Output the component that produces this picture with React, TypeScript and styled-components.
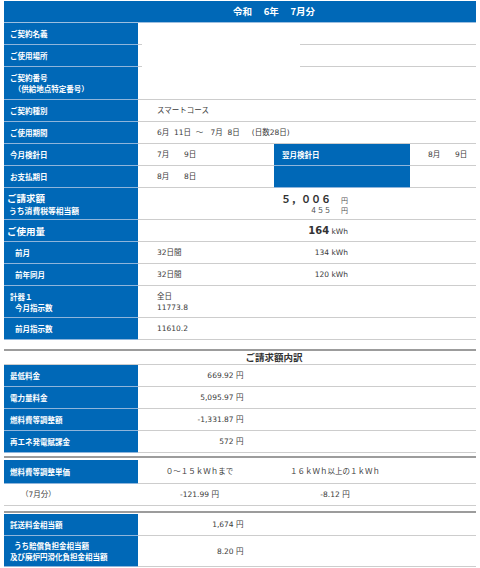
import React from "react";
import styled, { createGlobalStyle, css } from "styled-components";

const BLUE = "#0068b7";
const LATIN = `"DejaVu Sans", "Noto Sans CJK JP", sans-serif`;
const JP = `"Noto Sans CJK JP", "DejaVu Sans", sans-serif`;

const Global = createGlobalStyle`
  html, body { margin: 0; padding: 0; background: #fff; }
  body { font-family: ${LATIN}; color: #3a3a3a; }
`;

const Page = styled.main`
  display: flex;
  flex-direction: column;
  padding: 1px 4px 0;
`;

const Table = styled.section<{ $cols: string; $ruled?: boolean; $gap?: number; $pt?: number }>`
  display: grid;
  grid-template-columns: ${(p) => p.$cols};
  margin-top: ${(p) => p.$gap ?? 0}px;
  padding-top: ${(p) => p.$pt ?? 0}px;
  border-top: ${(p) => (p.$ruled ? "2px solid #9c9c9c" : "0")};
`;

const Banner = styled.div`
  grid-column: 1 / -1;
  height: 21px;
  background: ${BLUE};
  border-bottom: 1px solid #9dbfe0;
  color: #fff;
  font: bold 9.5px/21px ${JP};
  text-align: center;
  padding-left: 68px;
  white-space: pre;
`;

const Title = styled.div`
  grid-column: 1 / -1;
  height: 13px;
  border-bottom: 1px solid #cdcdcd;
  color: #333;
  font: bold 9.5px/13px ${JP};
  text-align: center;
  padding-left: 68px;
`;

const Label = styled.div<{ $col?: string; $pl?: number; $h?: number }>`
  grid-column: ${(p) => p.$col ?? "auto"};
  min-height: ${(p) => p.$h ?? 21}px;
  padding-left: ${(p) => p.$pl ?? 6}px;
  background: ${BLUE};
  border-bottom: 1px solid #8fb5db;
  color: #fff;
  font: bold 7.5px/11px ${JP};
  display: flex;
  flex-direction: column;
  justify-content: center;
  white-space: pre;
`;

const Value = styled.div<{
  $col?: string;
  $pl?: number;
  $h?: number;
  $align?: "start" | "center" | "end";
  $redact?: boolean;
}>`
  grid-column: ${(p) => p.$col ?? "auto"};
  min-height: ${(p) => p.$h ?? 21}px;
  padding-left: ${(p) => p.$pl ?? 19}px;
  border-bottom: 1px solid #cdcdcd;
  color: #3a3a3a;
  font: 7.5px/11px ${LATIN};
  display: flex;
  flex-direction: column;
  justify-content: center;
  align-items: ${(p) => (p.$align === "center" ? "center" : p.$align === "end" ? "flex-end" : "flex-start")};
  white-space: pre;
  ${(p) =>
    p.$redact &&
    css`
      border-image: linear-gradient(to right, #cdcdcd 5px, transparent 5px, transparent 162px, #cdcdcd 162px) 1;
    `}
`;

const Line = styled.span<{ $size?: number; $indent?: number; $lh?: number }>`
  display: block;
  font-size: ${(p) => p.$size ?? 7.5}px;
  line-height: ${(p) => p.$lh ?? 11}px;
  margin-left: ${(p) => p.$indent ?? 0}px;
`;

const Amounts = styled.div`
  display: grid;
  grid-template-columns: 193px auto;
  grid-template-rows: 12px 10px;
  column-gap: 10px;
  align-items: end;
`;

const BigAmount = styled.span`
  justify-self: end;
  font: bold 10px/12px ${JP};
  color: #333;
`;

const SmallAmount = styled.span`
  justify-self: end;
  font: 7px/10px ${JP};
  color: #444;
`;

const Yen = styled.span`
  font: 7px/10px ${JP};
  color: #555;
`;

const Usage = styled.div`
  box-sizing: border-box;
  width: 210px;
  padding-left: 19px;
  display: flex;
  justify-content: space-between;
  align-items: baseline;
`;

const BigNum = styled.b`
  font: bold 10px/12px ${LATIN};
  color: #333;
`;

const Money = styled.div`
  width: 105.5px;
  text-align: right;
`;

export default function App() {
  return (
    <>
      <Global />
      <Page>
        <Table $cols="134px 136px 136px 1fr">
          <Banner>{"令和\u3000 6年\u3000 7月分"}</Banner>

          <Label>ご契約名義</Label>
          <Value $col="2 / -1" $redact />

          <Label>ご使用場所</Label>
          <Value $col="2 / -1" $redact />

          <Label $h={32}>
            <Line>ご契約番号</Line>
            <Line>{"\u3000（供給地点特定番号）"}</Line>
          </Label>
          <Value $col="2 / -1" $h={32} />

          <Label>ご契約種別</Label>
          <Value $col="2 / -1">スマートコース</Value>

          <Label>ご使用期間</Label>
          <Value $col="2 / -1">{"6月  11日  ～   7月  8日     (日数28日)"}</Value>

          <Label>今月検針日</Label>
          <Value>{"7月\u3000   9日"}</Value>
          <Label $pl={8}>翌月検針日</Label>
          <Value $pl={18}>{"8月\u3000   9日"}</Value>

          <Label>お支払期日</Label>
          <Value>{"8月\u3000   8日"}</Value>
          <Label />
          <Value />

          <Label $h={31} $pl={3}>
            <Line $size={9.5} $lh={14}>ご請求額</Line>
            <Line $size={7.8} $lh={11} $indent={2}>うち消費税等相当額</Line>
          </Label>
          <Value $col="2 / -1" $pl={0} $h={31}>
            <Amounts>
              <BigAmount>５，００６</BigAmount>
              <Yen>円</Yen>
              <SmallAmount>４５５</SmallAmount>
              <Yen>円</Yen>
            </Amounts>
          </Value>

          <Label $pl={3}>
            <Line $size={9.5} $lh={12}>ご使用量</Line>
          </Label>
          <Value $col="2 / -1" $pl={0}>
            <Usage>
              <span />
              <span>
                <BigNum>164</BigNum> kWh
              </span>
            </Usage>
          </Value>

          <Label $pl={11}>前月</Label>
          <Value $col="2 / -1" $pl={0}>
            <Usage>
              <span>32日間</span>
              <span>134 kWh</span>
            </Usage>
          </Value>

          <Label $pl={11}>前年同月</Label>
          <Value $col="2 / -1" $pl={0}>
            <Usage>
              <span>32日間</span>
              <span>120 kWh</span>
            </Usage>
          </Value>

          <Label $h={31}>
            <Line>計器１</Line>
            <Line $indent={5}>今月指示数</Line>
          </Label>
          <Value $col="2 / -1" $h={31}>
            <Line>全日</Line>
            <Line>11773.8</Line>
          </Value>

          <Label $pl={11}>前月指示数</Label>
          <Value $col="2 / -1">11610.2</Value>
        </Table>

        <Table $cols="134px 1fr" $ruled $gap={9}>
          <Title>ご請求額内訳</Title>

          <Label>最低料金</Label>
          <Value $pl={0}>
            <Money>669.92 円</Money>
          </Value>

          <Label>電力量料金</Label>
          <Value $pl={0}>
            <Money>5,095.97 円</Money>
          </Value>

          <Label>燃料費等調整額</Label>
          <Value $pl={0}>
            <Money>-1,331.87 円</Money>
          </Value>

          <Label>再エネ発電賦課金</Label>
          <Value $pl={0}>
            <Money>572 円</Money>
          </Value>
        </Table>

        <Table $cols="134px 123px 148px 1fr" $ruled $gap={3} $pt={2}>
          <Label $h={23}>燃料費等調整単価</Label>
          <Value $pl={0} $align="center" $h={23}>０～１５ｋＷｈまで</Value>
          <Value $pl={0} $align="center" $h={23}>１６ｋＷｈ以上の１ｋＷｈ</Value>
          <Value $h={23} />

          <Value $pl={17}>（7月分）</Value>
          <Value $pl={0} $align="center">-121.99 円</Value>
          <Value $pl={0} $align="center">-8.12 円</Value>
          <Value />
        </Table>

        <Table $cols="134px 1fr" $ruled $gap={5} $pt={1}>
          <Label>託送料金相当額</Label>
          <Value $pl={0}>
            <Money>1,674 円</Money>
          </Value>

          <Label $h={30}>
            <Line $indent={4}>うち賠償負担金相当額</Line>
            <Line>及び廃炉円滑化負担金相当額</Line>
          </Label>
          <Value $pl={0} $h={30}>
            <Money>8.20 円</Money>
          </Value>
        </Table>
      </Page>
    </>
  );
}
